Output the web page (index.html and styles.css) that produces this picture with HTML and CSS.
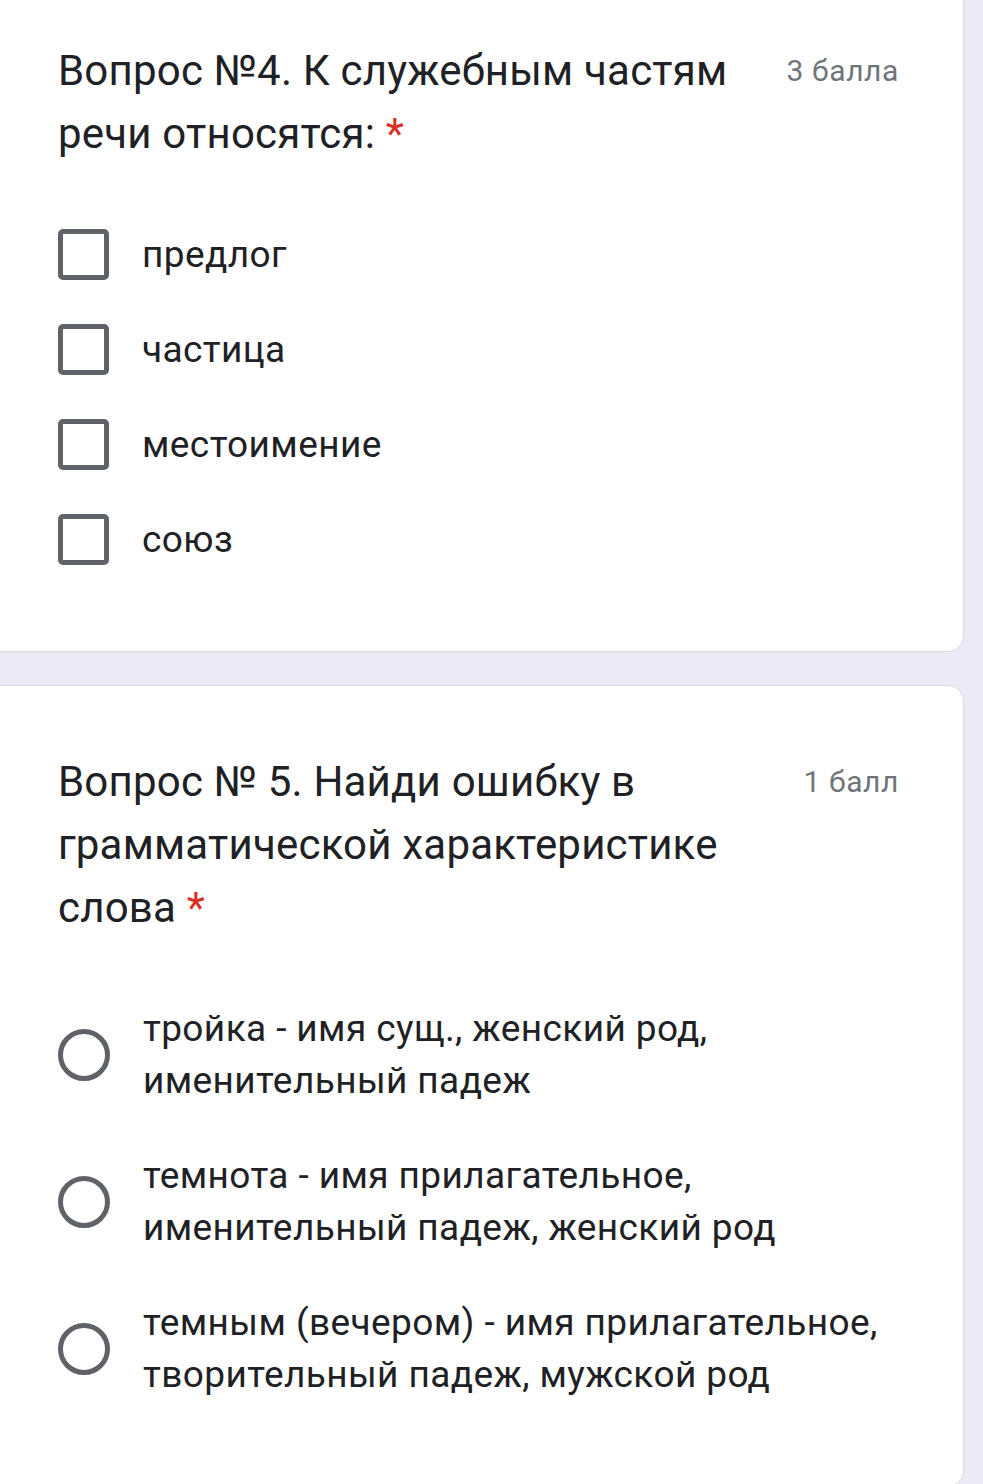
FILE: index.html
```html
<!DOCTYPE html>
<html lang="ru">
<head>
<meta charset="utf-8">
<title>Форма</title>
<link rel="stylesheet" href="styles.css">
</head>
<body>
<div class="page">
  <section class="card card-first">
    <div class="q-head">
      <div class="q-title">Вопрос №4. К служебным частям<br>речи относятся: <span class="req">*</span></div>
      <div class="q-points">3 балла</div>
    </div>
    <ul class="options">
      <li class="opt"><span class="check"></span><span class="opt-text">предлог</span></li>
      <li class="opt"><span class="check"></span><span class="opt-text">частица</span></li>
      <li class="opt"><span class="check"></span><span class="opt-text">местоимение</span></li>
      <li class="opt"><span class="check"></span><span class="opt-text">союз</span></li>
    </ul>
  </section>
  <section class="card">
    <div class="q-head">
      <div class="q-title">Вопрос № 5. Найди ошибку в<br>грамматической характеристике<br>слова <span class="req">*</span></div>
      <div class="q-points">1 балл</div>
    </div>
    <ul class="options">
      <li class="opt"><span class="radio"></span><span class="opt-text">тройка - имя сущ., женский род,<br>именительный падеж</span></li>
      <li class="opt"><span class="radio"></span><span class="opt-text">темнота - имя прилагательное,<br>именительный падеж, женский род</span></li>
      <li class="opt"><span class="radio"></span><span class="opt-text">темным (вечером) - имя прилагательное,<br>творительный падеж, мужской род</span></li>
    </ul>
  </section>
</div>
</body>
</html>
```

FILE: styles.css
```css
html, body {
  margin: 0;
  padding: 0;
  background: #ede9f6;
  height: 100%;
  overflow: hidden;
}
body {
  font-family: Roboto, "Liberation Sans", sans-serif;
  color: #202124;
}
.page {
  display: flex;
  flex-direction: column;
  gap: 33px;
  margin-top: -26px;
}
.card {
  background: #fff;
  border: 1px solid #dadce0;
  border-radius: 16px;
  margin-left: -24px;
  margin-right: 19px;
  padding: 64px 64px 64px 81px;
}
.q-head {
  display: flex;
  align-items: flex-start;
  justify-content: space-between;
  gap: 30px;
}
.q-title {
  font-size: 42px;
  letter-spacing: 0.2px;
  line-height: 63px;
  color: #202124;
}
.req {
  color: #d93025;
}
.q-points {
  font-size: 30px;
  line-height: 63px;
  letter-spacing: 0.6px;
  color: #70757a;
  white-space: nowrap;
}
.options {
  list-style: none;
  margin: 42px 0 0;
  padding: 0;
}
.opt {
  display: flex;
  align-items: center;
  gap: 33px;
  padding: 21.5px 0;
}
.opt-text {
  font-size: 37px;
  letter-spacing: 0.4px;
  line-height: 52px;
  color: #202124;
}
.check {
  flex: none;
  width: 41px;
  height: 41px;
  border: 5px solid #5f6368;
  border-radius: 5px;
}
.radio {
  flex: none;
  width: 42px;
  height: 42px;
  border: 5px solid #5f6368;
  border-radius: 50%;
}
```
